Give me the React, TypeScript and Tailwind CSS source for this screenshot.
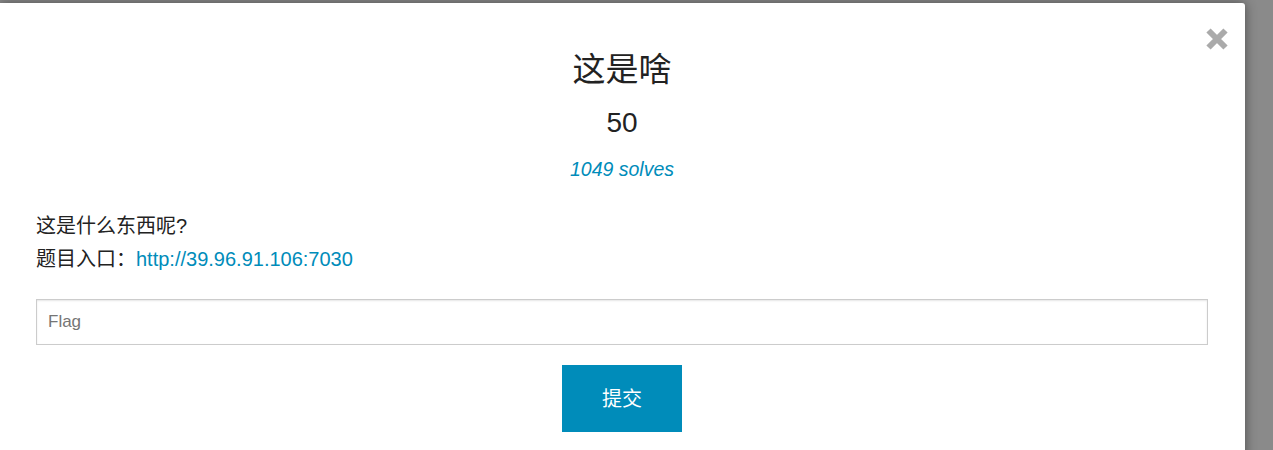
import React, { useState } from 'react'

const font = { fontFamily: '"Liberation Sans", "Noto Sans CJK SC", sans-serif' }

function CloseIcon() {
  return (
    <svg width="24" height="24" viewBox="0 0 24 24" fill="none">
      <path d="M3.5 3.5 L20.5 20.5 M20.5 3.5 L3.5 20.5" stroke="#aaaaaa" strokeWidth="6" />
    </svg>
  )
}

export default function App() {
  const [flag, setFlag] = useState('')

  return (
    <div className="h-[450px] w-full overflow-hidden bg-[#8a8a8a]" style={font}>
      <div className="relative mt-[3px] w-[1245px] h-[460px] bg-white rounded-tr-[3px] shadow-[0_0_12px_rgba(0,0,0,0.45)]">
        {/* Close */}
        <button className="absolute top-[24px] right-[16px] cursor-pointer">
          <CloseIcon />
        </button>

        <div className="flex flex-col pl-[36px] pr-[37px] pt-[47px]">
          {/* Header */}
          <h3 className="text-center text-[33px] leading-[40px] text-[#222222]">这是啥</h3>
          <h4 className="mt-[19px] text-center text-[28px] leading-[28px] text-[#222222]">50</h4>
          <p className="mt-[20px] text-center text-[19.5px] leading-[24px] italic text-[#008cba]">1049 solves</p>

          {/* Description */}
          <div className="mt-[29px] text-[20px] leading-[33px] text-[#222222]">
            <p>这是什么东西呢?</p>
            <p>
              题目入口：
              <a href="#" className="text-[#008cba]">http://39.96.91.106:7030</a>
            </p>
          </div>

          {/* Flag form */}
          <input
            value={flag}
            onChange={e => setFlag(e.target.value)}
            placeholder="Flag"
            className="mt-[23px] h-[46px] w-full border border-[#cccccc] px-[11px] text-[17px] text-[#222222] placeholder:text-[#757575] shadow-[inset_0_1px_2px_rgba(0,0,0,0.1)] outline-none"
          />
          <div className="flex justify-center mt-[20px]">
            <button className="w-[120px] h-[67px] bg-[#008cba] text-white text-[20px]">提交</button>
          </div>
        </div>
      </div>
    </div>
  )
}
